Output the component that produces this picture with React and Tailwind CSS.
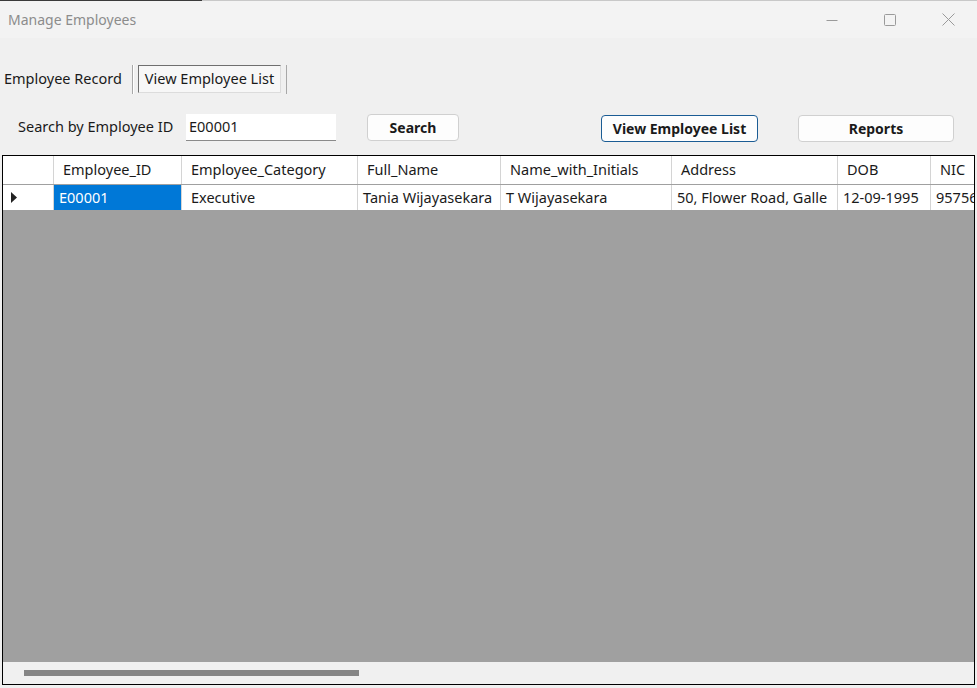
import React from 'react';

const COLUMNS = [
  { key: 'id', label: 'Employee_ID', width: 128, value: 'E00001' },
  { key: 'category', label: 'Employee_Category', width: 176, value: 'Executive' },
  { key: 'fullName', label: 'Full_Name', width: 143, value: 'Tania Wijayasekara' },
  { key: 'initials', label: 'Name_with_Initials', width: 171, value: 'T Wijayasekara' },
  { key: 'address', label: 'Address', width: 166, value: '50, Flower Road, Galle' },
  { key: 'dob', label: 'DOB', width: 93, value: '12-09-1995' },
  { key: 'nic', label: 'NIC', width: 90, value: '957563421V' },
];

const font = { fontFamily: '"Noto Sans", "Open Sans", sans-serif' };

export default function App() {
  return (
    <div className="w-[977px] h-[688px] bg-[#f0f0f0] overflow-hidden relative text-[14.5px] text-[#1a1a1a]" style={font}>
      {/* window top edge */}
      <div className="flex h-px">
        <div className="w-[202px] bg-[#3a3a3a]" />
        <div className="flex-1 bg-[#c8c8c8]" />
      </div>

      {/* Title bar */}
      <div className="h-[37px] bg-[#f3f3f3] flex items-center justify-between">
        <span className="pl-[8px] text-[#8c8c8c] text-[14px]">Manage Employees</span>
        <div className="flex items-center h-full">
          <div className="w-[58px] h-full flex items-center justify-center">
            <svg width="12" height="12" viewBox="0 0 12 12"><path d="M0.5 6.5h11" stroke="#9a9a9a" strokeWidth="1" /></svg>
          </div>
          <div className="w-[58px] h-full flex items-center justify-center">
            <svg width="12" height="12" viewBox="0 0 12 12"><rect x="0.5" y="0.5" width="11" height="11" rx="1" fill="none" stroke="#9a9a9a" strokeWidth="1" /></svg>
          </div>
          <div className="w-[58px] h-full flex items-center justify-center">
            <svg width="13" height="13" viewBox="0 0 13 13"><path d="M0.5 0.5l12 12M12.5 0.5l-12 12" stroke="#9a9a9a" strokeWidth="1" /></svg>
          </div>
        </div>
      </div>

      {/* Tabs */}
      <div className="flex items-center h-[30px] mt-[26px]">
        <span className="pl-[4px] pr-[10px]">Employee Record</span>
        <div className="w-px h-[29px] bg-[#a8a8a8] border-r border-white box-content" />
        <div className="ml-[4px] h-[28px] px-[6px] flex items-center bg-[#f7f7f7] border border-t-[#6f6f6f] border-l-[#6f6f6f] border-r-[#dcdcdc] border-b-[#dcdcdc]">
          View Employee List
        </div>
        <div className="ml-[5px] w-px h-[29px] bg-[#a8a8a8]" />
      </div>

      {/* Search row */}
      <div className="flex items-center h-[30px] mt-[18px]">
        <span className="pl-[18px] w-[186px] whitespace-nowrap">Search by Employee ID</span>
        <div className="w-[150px] h-[27px] bg-white border-b border-[#8a8a8a] flex items-center pl-[3px]">E00001</div>
        <button className="ml-[31px] w-[92px] h-[27px] rounded-[4px] bg-[#fdfdfd] border border-[#d0d0d0] font-bold text-[14px]">Search</button>
        <button className="ml-[142px] mt-[2px] w-[157px] h-[27px] rounded-[4px] bg-[#fdfdfd] border border-[#1b5c94] font-bold text-[14px]">View Employee List</button>
        <button className="ml-[40px] mt-[2px] w-[156px] h-[27px] rounded-[4px] bg-[#fdfdfd] border border-[#d0d0d0] font-bold text-[14px]">Reports</button>
      </div>

      {/* Data grid */}
      <div className="ml-[2px] mt-[13px] w-[973px] h-[530px] border border-black flex flex-col overflow-hidden">
        {/* header */}
        <div className="flex h-[29px] bg-white border-b border-[#a0a0a0] shrink-0">
          <div className="w-[51px] shrink-0 border-r border-[#d4d4d4]" />
          {COLUMNS.map((c) => (
            <div key={c.key} style={{ width: c.width }} className="shrink-0 border-r border-[#d4d4d4] flex items-center pl-[9px] whitespace-nowrap overflow-hidden">
              {c.label}
            </div>
          ))}
        </div>
        {/* row */}
        <div className="flex h-[25px] bg-white shrink-0">
          <div className="w-[51px] shrink-0 border-r border-[#d4d4d4] flex items-center pl-[8px]">
            <svg width="7" height="11" viewBox="0 0 7 11"><path d="M0 0L6 5.5L0 11Z" fill="#222" /></svg>
          </div>
          {COLUMNS.map((c, i) => (
            <div
              key={c.key}
              style={{ width: c.width }}
              className={`shrink-0 border-r border-[#d4d4d4] flex items-center whitespace-nowrap overflow-hidden ${i === 0 ? 'bg-[#0078d7] text-white pl-[5px]' : i === 1 ? 'pl-[9px]' : 'pl-[5px]'}`}
            >
              {c.value}
            </div>
          ))}
        </div>
        {/* empty area */}
        <div className="flex-1 bg-[#a0a0a0]" />
        {/* horizontal scrollbar */}
        <div className="h-[22px] bg-[#f0f0f0] shrink-0 flex items-center pl-[21px]">
          <div className="w-[335px] h-[6px] bg-[#858585]" />
        </div>
      </div>
    </div>
  );
}
